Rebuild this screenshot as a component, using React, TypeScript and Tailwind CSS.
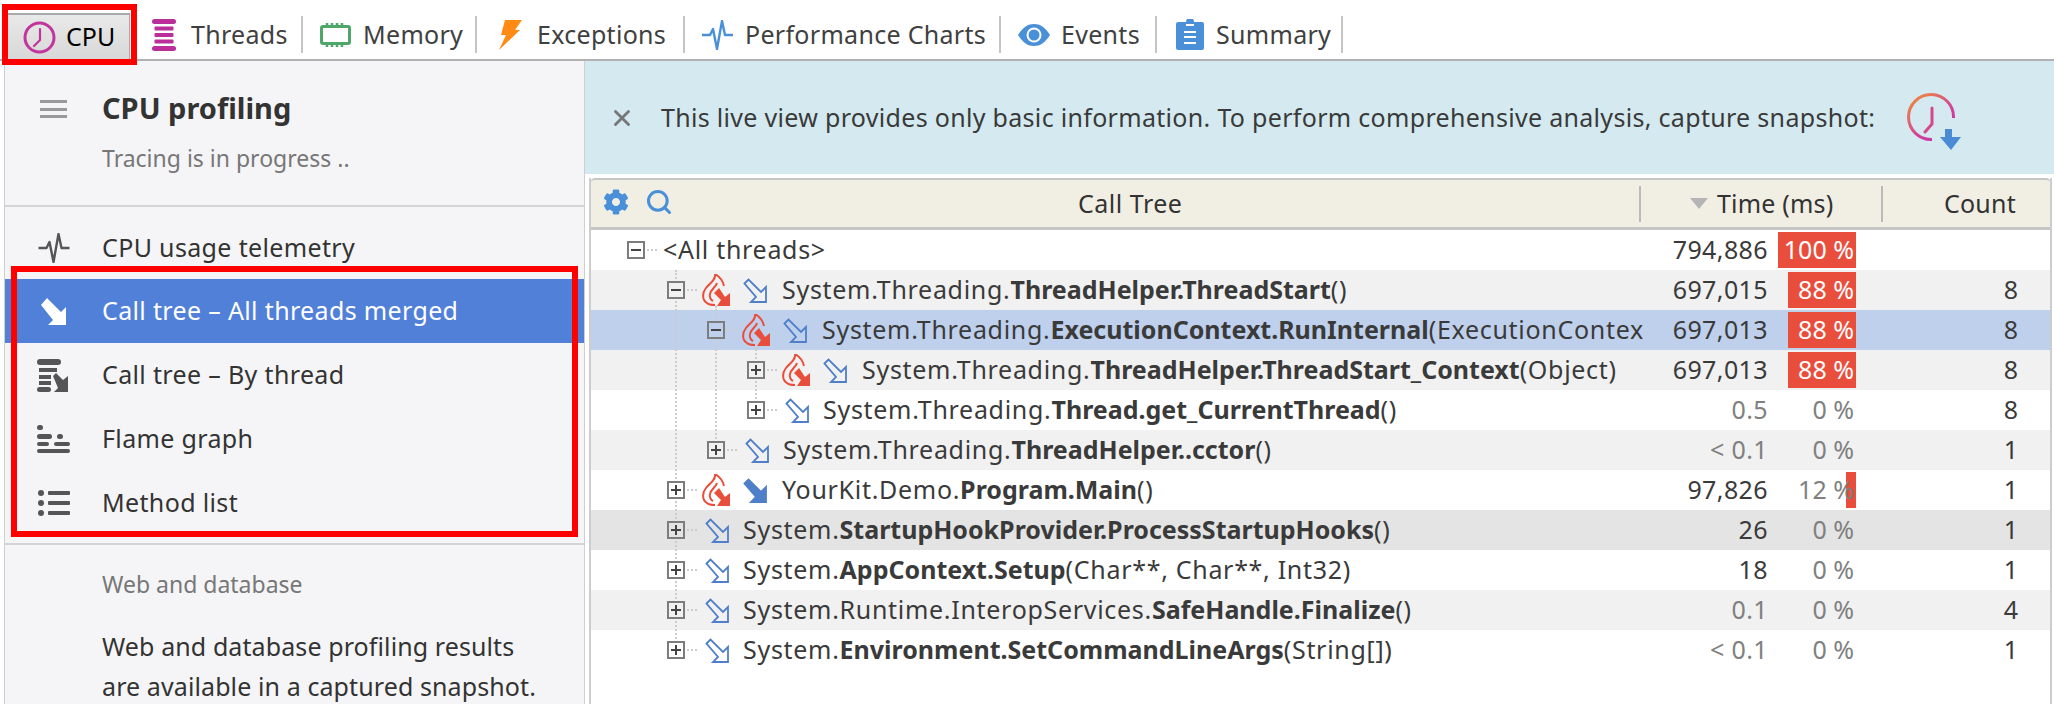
import type { ReactNode } from 'react';

import { FaCog } from 'react-icons/fa';
import { Search, X } from 'lucide-react';

function ClockIcon() {
  return (
    <svg width="33" height="33" viewBox="0 0 33 33" fill="none" stroke="#c2359e" strokeLinecap="round">
      <circle cx="16.5" cy="16.5" r="14.5" strokeWidth="3" />
      <path d="M17 8v11l-6 6" strokeWidth="2.2" />
    </svg>
  );
}

function ThreadsIcon() {
  return (
    <svg width="24" height="32" viewBox="0 0 24 32" fill="#b92e98">
      <rect x="0" y="0" width="24" height="5" rx="2.5" />
      <rect x="2.500" y="7.500" width="19" height="4" rx="1" />
      <rect x="2.500" y="14" width="19" height="4" rx="1" />
      <rect x="2.500" y="20.500" width="19" height="4" rx="1" />
      <rect x="0" y="27" width="24" height="5" rx="2.5" />
    </svg>
  );
}

function MemoryIcon() {
  return (
    <svg width="31" height="24" viewBox="0 0 31 24" fill="none" stroke="#4ea668">
      <rect x="1.5" y="3.5" width="28" height="17" rx="1.5" strokeWidth="3" />
      <path d="M7 0v3M12 0v3M17 0v3M22 0v3M7 21v3M12 21v3M17 21v3M22 21v3" strokeWidth="2.5" />
    </svg>
  );
}

function BoltIcon() {
  return (
    <svg width="23" height="30" viewBox="0 0 23 30">
      <path d="M6 0h17l-7 10h5L0 30l7-15H2z" fill="#ff8a14" />
    </svg>
  );
}

function PulseIcon({ color, width, height }: { color: string; width: number; height: number }) {
  return (
    <svg width={width} height={height} viewBox="0 0 31 30" fill="none" stroke={color} strokeWidth="2.4" strokeLinejoin="round">
      <path d="M0 15h8l3-6 4 20 5-28 3 14h8" />
    </svg>
  );
}

function EyeIcon() {
  return (
    <svg width="32" height="22" viewBox="0 0 32 22">
      <path d="M0 11C5 3 10 0 16 0s11 3 16 11c-5 8-10 11-16 11S5 19 0 11z" fill="#4a90d9" />
      <circle cx="16" cy="11" r="7.5" fill="#fff" />
      <circle cx="16" cy="11" r="5.5" fill="#4a90d9" />
    </svg>
  );
}

function ClipboardIcon() {
  return (
    <svg width="28" height="31" viewBox="0 0 28 31">
      <path d="M2 3h8a4 4 0 0 1 8 0h8a2 2 0 0 1 2 2v24a2 2 0 0 1-2 2H2a2 2 0 0 1-2-2V5a2 2 0 0 1 2-2z" fill="#4a90d9" />
      <path d="M10 6h8M8 13h12M8 18h12M8 24h12" stroke="#fff" strokeWidth="2.2" />
    </svg>
  );
}

function SnapshotIcon() {
  return (
    <svg width="56" height="57" viewBox="0 0 56 57" fill="none" className="mt-[8px]">
      <defs>
        <linearGradient id="snapGrad" gradientUnits="userSpaceOnUse" x1="4" y1="4" x2="40" y2="50">
          <stop offset="0" stopColor="#f08a3c" />
          <stop offset="0.6" stopColor="#d0409a" />
          <stop offset="1" stopColor="#c92fb0" />
        </linearGradient>
      </defs>
      <path d="M46.500 25A22.500 22.500 0 1 0 25 46.500" stroke="url(#snapGrad)" strokeWidth="3" />
      <path d="M25 15v16l-7 8" stroke="#d6478c" strokeWidth="3" strokeLinecap="round" />
      <path d="M38 36h7v8h9L44 57 33 44h5z" fill="#4a8bd6" />
    </svg>
  );
}

function TreeArrow({ solid }: { solid?: boolean }) {
  return (
    <svg width="25" height="25" viewBox="0 0 25 25" className="shrink-0">
      <path
        d="M1.500 5.500 5.500 1.500 18 14l5-5v15H8l5-5z"
        fill={solid ? '#4f7fc9' : 'none'}
        stroke="#4f7fc9"
        strokeWidth="1.800"
      />
    </svg>
  );
}

function FlameIcon() {
  return (
    <svg width="28" height="32" viewBox="0 0 28 32" className="shrink-0">
      <g fill="none" stroke="#e94e3d" strokeWidth="2">
        <path d="M13 0c1 6-5 9-9 14-4 5-4 12 1 15 2 2 5 2 8 2" />
        <path d="M13 0c5 3 8 7 9 12" />
        <path d="M15 9c-1 4-6 6-7 11-1 3 1 6 3 7" />
      </g>
      <path d="M17 14l-5 5 7 7-4 6h13V19l-5 4z" fill="#e94e3d" />
    </svg>
  );
}

function SideArrow() {
  return (
    <svg width="26" height="27" viewBox="0 0 26 27" fill="#fff">
      <path d="M0 7 6 0l14 14 5-5v18H7l5-5z" />
    </svg>
  );
}

function ThreadTreeIcon() {
  return (
    <svg width="33" height="33" viewBox="0 0 33 33" fill="#555">
      <rect x="0" y="0" width="24" height="6" rx="3" />
      <rect x="2" y="9" width="18" height="4" />
      <rect x="2" y="16" width="12" height="4" />
      <rect x="2" y="22" width="12" height="4" />
      <rect x="0" y="28" width="14" height="5" rx="2.500" />
      <path d="M16 17l3-3 7 7 5-4v16H17l4-4z" />
    </svg>
  );
}

function FlameGraphIcon() {
  return (
    <svg width="33" height="29" viewBox="0 0 33 29" fill="#555">
      <rect x="0" y="0" width="6" height="5" rx="2.500" />
      <rect x="0" y="9" width="15" height="5" rx="2.500" />
      <rect x="20" y="9" width="6" height="5" rx="2.500" />
      <rect x="0" y="17" width="12" height="4" rx="2" />
      <rect x="17" y="17" width="16" height="4" rx="2" />
      <rect x="0" y="24" width="33" height="4" rx="2" />
    </svg>
  );
}

function MethodListIcon() {
  return (
    <svg width="32" height="26" viewBox="0 0 32 26" fill="#555">
      <circle cx="3" cy="3" r="3" />
      <circle cx="3" cy="13" r="3" />
      <circle cx="3" cy="23" r="3" />
      <rect x="10" y="1" width="22" height="4" rx="1" />
      <rect x="10" y="11" width="22" height="4" rx="1" />
      <rect x="10" y="21" width="22" height="4" rx="1" />
    </svg>
  );
}

const TABS = [
  { label: 'Threads', icon: <ThreadsIcon />, size: 'w-[173px] pl-[22px]', gap: 'gap-[15px]' },
  { label: 'Memory', icon: <MemoryIcon />, size: 'w-[174px] pl-[17px]', gap: 'gap-[12px]' },
  { label: 'Exceptions', icon: <BoltIcon />, size: 'w-[208px] pl-[22px]', gap: 'gap-[15px]' },
  { label: 'Performance Charts', icon: <PulseIcon color="#4a90d9" width={31} height={30} />, size: 'w-[316px] pl-[17px]', gap: 'gap-[12px]' },
  { label: 'Events', icon: <EyeIcon />, size: 'w-[156px] pl-[17px]', gap: 'gap-[11px]' },
  { label: 'Summary', icon: <ClipboardIcon />, size: 'w-[186px] pl-[19px]', gap: 'gap-[12px]' },
];

function TabBar() {
  return (
    <div className="flex h-[61px] shrink-0 items-end border-b-2 border-[#b2b2b2] bg-white pl-[7px]">
      <button className="flex h-[46px] w-[123px] items-center gap-[10px] border-x border-t-2 border-[#aaa] bg-gradient-to-b from-[#e9e9e9] to-[#d8d8d8] pl-[15px] text-[25px] text-black">
        <ClockIcon />
        <span>CPU</span>
      </button>
      <div className="mb-[6px] flex items-center">
        {TABS.map(tab => (
          <div key={tab.label} className={`flex h-[37px] items-center border-r-2 border-[#c4c4c4] ${tab.size} ${tab.gap}`}>
            {tab.icon}
            <span className="text-[25px] tracking-[0.3px] text-[#404040]">{tab.label}</span>
          </div>
        ))}
      </div>
    </div>
  );
}

function NavItem({ icon, label, active }: { icon: ReactNode; label: string; active?: boolean }) {
  return (
    <div className={`flex h-16 items-center ${active ? 'bg-[#5180d9] text-white' : 'text-[#333]'}`}>
      <div className="flex w-[97px] justify-center px-[8px]">{icon}</div>
      <span className="text-[25px] tracking-[0.35px]">{label}</span>
    </div>
  );
}

function Sidebar() {
  return (
    <aside className="flex h-full w-[581px] shrink-0 flex-col overflow-hidden border-x border-[#cfcfcf] bg-[#f5f5f7]">
      <div className="flex h-[146px] shrink-0 border-b-2 border-[#d4d4d4]">
        <div className="flex w-[97px] shrink-0 justify-center pt-[39px] pr-[1px]">
          <div className="flex h-[18px] w-[27px] flex-col justify-between">
            <div className="h-[3px] bg-[#999]" />
            <div className="h-[3px] bg-[#999]" />
            <div className="h-[3px] bg-[#999]" />
          </div>
        </div>
        <div className="flex flex-col">
          <span className="mt-[27px] text-[29px] leading-[40px] font-bold text-[#333]">CPU profiling</span>
          <span className="mt-[14px] text-[23px] leading-[32px] text-[#777]">Tracing is in progress ..</span>
        </div>
      </div>
      <div className="mt-[9px] flex shrink-0 flex-col border-b-2 border-[#d4d4d4] pb-[8px]">
        <div className="flex h-[63px] items-center text-[#333]">
          <div className="flex w-[97px] justify-center px-[8px]">
            <PulseIcon color="#555" width={32} height={30} />
          </div>
          <span className="text-[25px] tracking-[0.35px]">CPU usage telemetry</span>
        </div>
        <NavItem active icon={<SideArrow />} label="Call tree – All threads merged" />
        <NavItem icon={<ThreadTreeIcon />} label="Call tree – By thread" />
        <NavItem icon={<FlameGraphIcon />} label="Flame graph" />
        <NavItem icon={<MethodListIcon />} label="Method list" />
      </div>
      <div className="pl-[97px]">
        <p className="mt-[23px] text-[23px] leading-[32px] text-[#777]">Web and database</p>
        <div className="mt-[30px] flex flex-col gap-2 text-[25px] leading-[32px] tracking-[0.1px] text-[#333]">
          <p>Web and database profiling results</p>
          <p>are available in a captured snapshot.</p>
        </div>
      </div>
    </aside>
  );
}

type Part = { text: string; bold?: boolean };

interface Row {
  parts: Part[];
  time: string;
  pct: string;
  barWidth: number;
  count: string;
  muted?: boolean;
  open?: boolean;
  flame?: boolean;
  solid?: boolean;
  noArrow?: boolean;
  indent: string;
  bg: string;
}

const ROWS: Row[] = [
  { parts: [{ text: '<All threads>' }], time: '794,886', pct: '100 %', barWidth: 78, count: '', open: true, noArrow: true, indent: 'pl-[36px]', bg: 'bg-white' },
  {
    parts: [{ text: 'System.Threading.' }, { text: 'ThreadHelper.ThreadStart', bold: true }, { text: '()' }],
    time: '697,015', pct: '88 %', barWidth: 68, count: '8', open: true, flame: true, indent: 'pl-[76px]', bg: 'bg-[#f1f1f1]',
  },
  {
    parts: [{ text: 'System.Threading.' }, { text: 'ExecutionContext.RunInternal', bold: true }, { text: '(ExecutionContex' }],
    time: '697,013', pct: '88 %', barWidth: 68, count: '8', open: true, flame: true, indent: 'pl-[116px]', bg: 'bg-[#bed0ec]',
  },
  {
    parts: [{ text: 'System.Threading.' }, { text: 'ThreadHelper.ThreadStart_Context', bold: true }, { text: '(Object)' }],
    time: '697,013', pct: '88 %', barWidth: 68, count: '8', flame: true, indent: 'pl-[156px]', bg: 'bg-[#f1f1f1]',
  },
  {
    parts: [{ text: 'System.Threading.' }, { text: 'Thread.get_CurrentThread', bold: true }, { text: '()' }],
    time: '0.5', pct: '0 %', barWidth: 0, count: '8', muted: true, indent: 'pl-[156px]', bg: 'bg-white',
  },
  {
    parts: [{ text: 'System.Threading.' }, { text: 'ThreadHelper..cctor', bold: true }, { text: '()' }],
    time: '< 0.1', pct: '0 %', barWidth: 0, count: '1', muted: true, indent: 'pl-[116px]', bg: 'bg-[#f1f1f1]',
  },
  {
    parts: [{ text: 'YourKit.Demo.' }, { text: 'Program.Main', bold: true }, { text: '()' }],
    time: '97,826', pct: '12 %', barWidth: 10, count: '1', flame: true, solid: true, indent: 'pl-[76px]', bg: 'bg-white',
  },
  {
    parts: [{ text: 'System.' }, { text: 'StartupHookProvider.ProcessStartupHooks', bold: true }, { text: '()' }],
    time: '26', pct: '0 %', barWidth: 0, count: '1', indent: 'pl-[76px]', bg: 'bg-[#e4e4e4]',
  },
  {
    parts: [{ text: 'System.' }, { text: 'AppContext.Setup', bold: true }, { text: '(Char**, Char**, Int32)' }],
    time: '18', pct: '0 %', barWidth: 0, count: '1', indent: 'pl-[76px]', bg: 'bg-white',
  },
  {
    parts: [{ text: 'System.Runtime.InteropServices.' }, { text: 'SafeHandle.Finalize', bold: true }, { text: '()' }],
    time: '0.1', pct: '0 %', barWidth: 0, count: '4', muted: true, indent: 'pl-[76px]', bg: 'bg-[#f1f1f1]',
  },
  {
    parts: [{ text: 'System.' }, { text: 'Environment.SetCommandLineArgs', bold: true }, { text: '(String[])' }],
    time: '< 0.1', pct: '0 %', barWidth: 0, count: '1', muted: true, indent: 'pl-[76px]', bg: 'bg-white',
  },
];

function Expander({ open, bg }: { open?: boolean; bg: string }) {
  return (
    <div className={`relative z-10 flex size-[18px] shrink-0 items-center justify-center border-2 border-[#7d7d7d] ${bg}`}>
      <div className="absolute h-[2px] w-[10px] bg-[#444]" />
      {!open && <div className="absolute h-[10px] w-[2px] bg-[#444]" />}
      <div className="absolute left-[18px] top-[6px] w-[10px] border-t-2 border-dotted border-[#ccc]" />
    </div>
  );
}

function TreeRow({ row }: { row: Row }) {
  return (
    <div className={`flex h-10 items-center text-[25px] text-[#3a3a3a] ${row.bg}`}>
      <div className={`flex h-full w-[1052px] shrink-0 items-center overflow-hidden whitespace-nowrap ${row.indent}`}>
        <Expander open={row.open} bg={row.bg} />
        {row.flame ? <div className="ml-[17px] mr-[13px] shrink-0"><FlameIcon /></div> : null}
        {!row.noArrow && (
          <div className={row.flame ? 'mr-[14px] shrink-0' : 'ml-[20px] mr-[13px] shrink-0'}>
            <TreeArrow solid={row.solid} />
          </div>
        )}
        <span className={row.noArrow ? 'ml-[18px]' : ''}>
          {row.parts.map(part => (
            <span key={part.text} className={part.bold ? 'font-bold' : 'tracking-[0.7px]'}>{part.text}</span>
          ))}
        </span>
      </div>
      <div className={`w-[125px] shrink-0 text-right tracking-[0.4px] ${row.muted ? 'text-[#808080]' : ''}`}>
        {row.time}
      </div>
      <div className="relative ml-[10px] flex h-[36px] w-[78px] shrink-0 justify-end">
        {row.barWidth > 0 && (
          <div className="h-full bg-[#e94e3d]" style={{ width: row.barWidth }} />
        )}
        <span className={`absolute right-[2px] top-0 leading-[34px] ${row.barWidth > 10 ? 'text-white' : 'text-[#808080]'}`}>
          {row.pct}
        </span>
      </div>
      <div className="w-[162px] shrink-0 text-right">{row.count}</div>
    </div>
  );
}

function CallTree() {
  return (
    <div className="ml-[4px] mt-[4px] flex min-h-0 w-[1463px] flex-1 flex-col border-x-2 border-[#cdcdcd]">
      <div className="flex h-[52px] shrink-0 items-center rounded-t-[4px] border-t-2 border-b-[3px] border-[#c6c6c6] bg-[#f1eee4] text-[25px] text-[#333]">
        <div className="flex h-[36px] w-[1050px] shrink-0 items-center border-r-2 border-[#bbb]">
          <FaCog className="mb-[3px] ml-[12px] size-[26px] text-[#4a90d9]" />
          <Search className="mb-[3px] ml-[16px] size-[28px] text-[#4a90d9]" strokeWidth={2.6} />
          <span className="ml-[405px] tracking-[0.5px]">Call Tree</span>
        </div>
        <div className="flex h-[36px] w-[242px] shrink-0 items-center border-r-2 border-[#bbb] pl-[49px]">
          <div className="mr-[9px] size-0 border-x-[9px] border-t-[11px] border-x-transparent border-t-[#b5b5b5]" />
          <span className="tracking-[0.2px]">Time (ms)</span>
        </div>
        <div className="pl-[61px] tracking-[0.2px]">Count</div>
      </div>
      <div className="relative flex-1 bg-white">
        {ROWS.map(row => (
          <TreeRow key={row.parts.map(p => p.text).join('')} row={row} />
        ))}
        <div className="absolute left-[84px] top-[40px] h-[380px] border-l-2 border-dotted border-[#ccc]" />
        <div className="absolute left-[124px] top-[76px] h-[144px] border-l-2 border-dotted border-[#ccc]" />
        <div className="absolute left-[164px] top-[116px] h-[64px] border-l-2 border-dotted border-[#ccc]" />
      </div>
    </div>
  );
}

function Banner() {
  return (
    <div className="flex h-[113px] shrink-0 items-center bg-[#d4eaf0]">
      <X className="ml-[24px] size-[26px] text-[#777]" strokeWidth={2.6} />
      <span className="ml-[26px] text-[25px] tracking-[0.31px] text-[#3a3a3a]">
        This live view provides only basic information. To perform comprehensive analysis, capture snapshot:
      </span>
      <div className="ml-[32px]">
        <SnapshotIcon />
      </div>
    </div>
  );
}

export default function App() {
  return (
    <div className="relative flex h-[704px] w-[2054px] flex-col overflow-hidden bg-white font-['Noto_Sans',sans-serif]">
      <TabBar />
      <div className="flex min-h-0 flex-1 pl-[4px]">
        <Sidebar />
        <main className="flex min-w-0 flex-1 flex-col">
          <Banner />
          <CallTree />
        </main>
      </div>
      <div className="pointer-events-none absolute left-[2px] top-[4px] h-[61px] w-[135px] border-[6px] border-[#ff0000]" />
      <div className="pointer-events-none absolute left-[11px] top-[266px] h-[271px] w-[567px] border-[6px] border-[#ff0000]" />
    </div>
  );
}
